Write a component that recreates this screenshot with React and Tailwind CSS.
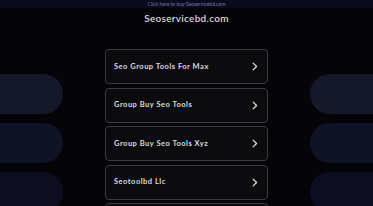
import React from "react";

const links = [
  "Seo Group Tools For Max",
  "Group Buy Seo Tools",
  "Group Buy Seo Tools Xyz",
  "Seotoolbd Llc",
];

const pills = ["bg-[#141829]", "bg-[#101326]", "bg-[#0c0e20]"];

const Chevron = () => (
  <svg width="11" height="11" viewBox="0 0 24 24" fill="none" stroke="#e8e8e8" strokeWidth="2.6" strokeLinecap="round" strokeLinejoin="round">
    <path d="M9 4.5l7.5 7.5-7.5 7.5" />
  </svg>
);

export default function App() {
  return (
    <div className="relative w-[373px] h-[206px] overflow-hidden bg-[#050409] font-['Lato',sans-serif]">
      <div className="absolute left-0 top-[74px] flex flex-col gap-[9px]">
        {pills.map((c, i) => (
          <div key={i} className={`w-[63px] h-[40px] rounded-r-full ${c}`} />
        ))}
      </div>
      <div className="absolute right-0 top-[74px] flex flex-col gap-[9px]">
        {pills.map((c, i) => (
          <div key={i} className={`w-[63px] h-[40px] rounded-l-full ${c}`} />
        ))}
      </div>

      <div className="relative flex flex-col items-center">
        <div className="w-full h-[8px] bg-[#0a0a1e] flex items-center justify-center text-[5px] text-[#7378a8] leading-none">
          Click here to buy Seoservicebd.com
        </div>
        <div className="mt-[5px] text-[10px] leading-[10px] text-[#d8d8dc] font-semibold tracking-[0.3px]">
          Seoservicebd.com
        </div>
        <div className="mt-[26px] flex flex-col gap-[3.5px] w-[163px]">
          {links.map((t) => (
            <div key={t} className="h-[35px] shrink-0 flex items-center justify-between pl-[8px] pr-[7px] border border-[#3b3b40] rounded-[4px] bg-[#0b0b0e]">
              <span className="text-[7.5px] font-bold text-[#dcdcdc] tracking-[0.5px]">{t}</span>
              <Chevron />
            </div>
          ))}
          <div className="h-[35px] shrink-0 border border-[#3b3b40] rounded-[4px] bg-[#0b0b0e]" />
        </div>
      </div>
    </div>
  );
}
